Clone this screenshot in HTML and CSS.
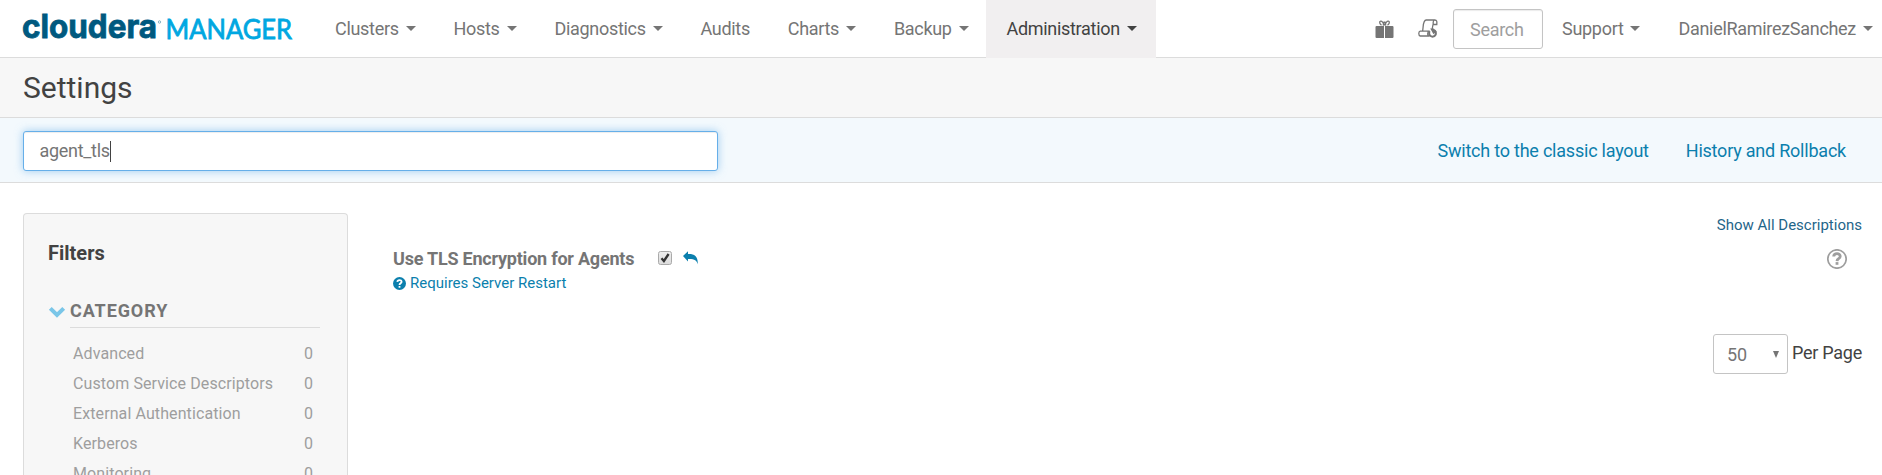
FILE: index.html
```html
<!DOCTYPE html>
<html lang="en">
<head>
<meta charset="utf-8">
<title>Settings - Cloudera Manager</title>
<link rel="stylesheet" href="styles.css">
</head>
<body>
<header class="navbar">
  <a class="brand">
    <svg width="276" height="44" viewBox="0 0 276 44">
      <text class="brand-name" x="-1" y="30" textLength="135" lengthAdjust="spacingAndGlyphs">cloudera</text>
      <circle class="brand-mark" cx="136.5" cy="14" r="1.2"/>
      <text class="brand-product" x="142.5" y="30.5" textLength="126.500" lengthAdjust="spacingAndGlyphs">MANAGER</text>
    </svg>
  </a>
  <nav class="menu">
    <a class="item">Clusters<i class="caret"></i></a>
    <a class="item">Hosts<i class="caret"></i></a>
    <a class="item">Diagnostics<i class="caret"></i></a>
    <a class="item">Audits</a>
    <a class="item">Charts<i class="caret"></i></a>
    <a class="item">Backup<i class="caret"></i></a>
    <a class="item active">Administration<i class="caret"></i></a>
  </nav>
  <div class="tools">
    <svg class="gift" width="19" height="19" viewBox="0 0 19 19">
      <path class="fill" d="M1.6 6H9v12H1.6Q.5 18 .5 17V7Q.5 6 1.6 6zM10 6h7.400q1.100 0 1.100 1v10q0 1-1.100 1H10z"/>
      <path class="line" d="M9.200 5.500C8 2 7 1 5.700 1.200 4 1.600 4.500 4.200 6.500 5.200M9.800 5.500C11 2 12 1 13.300 1.200 15 1.600 14.500 4.200 12.500 5.200M8.200 5.500l.8-3.300h1l.8 3.300"/>
    </svg>
    <svg class="scroll" width="20" height="20" viewBox="0 0 20 20">
      <path class="line" d="M4.500 12.200C5.600 8.500 4.500 1.200 8.200 1h8.600c2.200 0 2.200 1.600 2 4.500h-3.600V3q.2-1.600 1.400-2M15 5.500l-.8 4.500M11.500 12.200H2.200Q.8 12.500.8 14.600T2.200 17h9.300M10.200 12.500q-.9 2 0 4.200"/>
      <path class="ring" d="M11.800 12.200a3.400 3.400 0 1 0 4.600-.8"/>
      <path class="fill" d="M12.200 9.500h3.500l3 3-3.200 2.800z"/>
    </svg>
    <input class="nav-search" type="text" placeholder="Search">
    <a class="item support">Support<i class="caret"></i></a>
    <a class="item user">DanielRamirezSanchez<i class="caret"></i></a>
  </div>
</header>
<section class="title-bar"><h1>Settings</h1></section>
<section class="action-bar">
  <div class="query"><span>agent_tls</span><i class="cursor"></i></div>
  <div class="links"><a>Switch to the classic layout</a><a>History and Rollback</a></div>
</section>
<main class="content">
  <aside class="filters">
    <h2>Filters</h2>
    <div class="group">
      <svg class="chevron" width="18" height="12" viewBox="0 0 18 12"><path d="M2.300 2.300L9 8.900l6.700-6.600"/></svg>
      <div class="group-body">
        <h3>CATEGORY</h3>
        <ul>
          <li><span>Advanced</span><span>0</span></li>
          <li><span>Custom Service Descriptors</span><span>0</span></li>
          <li><span>External Authentication</span><span>0</span></li>
          <li><span>Kerberos</span><span>0</span></li>
          <li><span>Monitoring</span><span>0</span></li>
        </ul>
      </div>
    </div>
  </aside>
  <div class="results">
    <a class="show-all">Show All Descriptions</a>
    <div class="setting">
      <div class="setting-label">
        <strong>Use TLS Encryption for Agents</strong>
        <a class="restart">
          <svg width="13" height="13" viewBox="0 0 13 13"><circle cx="6.500" cy="6.500" r="6.500"/><path class="q" d="M4.300 4.800C4.500 2.500 8.700 2.500 8.600 4.900 8.500 6.400 6.600 6.300 6.500 8"/><path class="q" d="M6.500 9v1.700"/></svg>
          <span>Requires Server Restart</span>
        </a>
      </div>
      <svg class="check" width="14" height="14" viewBox="0 0 14 14">
        <defs><linearGradient id="box" x2="0" y2="1"><stop offset="0" stop-color="#eee"/><stop offset="1" stop-color="#dcdcdc"/></linearGradient></defs>
        <rect x=".5" y=".5" width="13" height="13" rx="2" fill="url(#box)" stroke="#aaa"/>
        <path d="M3.500 7.200l2.400 2.800 4.700-7" fill="none" stroke="#333" stroke-width="2.300"/>
      </svg>
      <svg class="undo" width="15" height="14" viewBox="0 0 15 14"><path d="M0 5L5 .3v2.700c6.500-.3 10.200 2.500 9.700 10.200-.8-3.800-3.500-5.500-9.700-5.200v2.500z"/></svg>
      <svg class="help" width="20" height="20" viewBox="0 0 20 20"><circle cx="10" cy="10" r="9.200"/><path class="q" d="M6.700 7.500C7 3.600 13.300 3.900 13.200 7.500 13.100 9.900 10.100 9.500 10 12.100"/><path class="q" d="M10 13.100v2.700"/></svg>
    </div>
    <div class="pager">
      <div class="select"><span>50</span><i></i></div>
      <span class="per">Per Page</span>
    </div>
  </div>
</main>
</body>
</html>
```
FILE: styles.css
```css
* { box-sizing: border-box; }
html, body { height: 100%; }
body { margin: 0; overflow: hidden; background: #fff; color: #424242; font: 18px/24px Roboto, sans-serif; display: flex; flex-direction: column; }
h1, h2, h3, ul { margin: 0; padding: 0; }
svg { display: block; flex: none; }

.navbar { display: flex; flex: none; height: 58px; border-bottom: 1px solid #dcdcdc; }
.brand { width: 315px; padding: 8px 0 0 23px; }
.brand svg { overflow: visible; }
.brand-name { font: 700 32px Inter, sans-serif; fill: #00597f; stroke: #00597f; stroke-width: .8; }
.brand-product { font: 400 27px Lato, sans-serif; fill: #00a7e1; stroke: #00a7e1; stroke-width: .8; }
.brand-mark { fill: none; stroke: #5f96ad; stroke-width: .7; }
.menu { display: flex; height: 58px; }
.item { display: flex; height: 58px; align-items: center; padding: 0 17.8px 0 20px; color: #757575; white-space: nowrap; letter-spacing: -.3px; }
.caret { margin: 0 0 2px 7px; border: 5px solid transparent; border-top-color: currentColor; border-bottom: 0; }
.active { padding-right: 19px; background: #f1eff0; color: #424242; }
.tools { display: flex; margin-left: auto; align-items: flex-start; }
.gift { margin: 20px 24px 0 0; }
.scroll { margin: 19px 15px 0 0; }
.fill { fill: #757575; }
.line { fill: none; stroke: #757575; stroke-width: 1.300; }
.ring { fill: none; stroke: #757575; stroke-width: 2; }
.nav-search { width: 90px; height: 40px; margin-top: 9px; padding: 1px 16px 0; border: 1px solid #c4c4c4; border-radius: 3px; box-shadow: inset 0 1px 1px rgba(0,0,0,.08); font: 18px Roboto, sans-serif; letter-spacing: -.3px; }
.nav-search::placeholder { color: #9e9e9e; opacity: 1; }
.support { padding: 0 18px 0 19px; }
.user { padding-right: 9px; }

.title-bar { flex: none; height: 60px; padding: 14px 23px 0; background: #f7f7f7; border-bottom: 1px solid #dcdcdc; }
.title-bar h1 { font-size: 30px; line-height: 32px; font-weight: 400; }
.action-bar { display: flex; flex: none; justify-content: space-between; height: 65px; padding: 13px 36px 0 23px; background: #f3f9fd; border-bottom: 1px solid #dcdcdc; }
.query { display: flex; align-items: center; width: 695px; height: 40px; padding-left: 15.500px; background: #fff; border: 1px solid #66afe9; border-radius: 3px; box-shadow: inset 0 1px 1px rgba(0,0,0,.075), 0 0 8px rgba(102,175,233,.6); color: #757575; letter-spacing: -.3px; }
.cursor { width: 1px; height: 21px; background: #424242; }
.links { display: flex; gap: 37px; height: 40px; align-items: center; color: #0b7fad; letter-spacing: -.22px; }

.content { display: flex; flex: 1; min-height: 0; padding: 30px 20px 0 23px; }
.filters { width: 325px; flex: none; padding: 27px 27px 0 24px; background: #f7f7f7; border: 1px solid #dcdcdc; border-bottom: 0; border-radius: 4px 4px 0 0; overflow: hidden; }
.filters h2 { font-size: 20px; line-height: 24px; font-weight: 700; }
.group { display: flex; margin-top: 33px; }
.chevron { margin: 8px 4px 0 0; }
.chevron path { fill: none; stroke: #7ac6e8; stroke-width: 4; }
.group-body { flex: 1; }
.group h3 { height: 30px; border-bottom: 1px solid #dcdcdc; color: #757575; font-size: 18px; line-height: 25px; font-weight: 700; letter-spacing: .9px; }
.group ul { padding: 11px 7px 0 3px; list-style: none; }
.group li { display: flex; justify-content: space-between; height: 30px; line-height: 30px; font-size: 16px; color: #9e9e9e; letter-spacing: .1px; }

.results { flex: 1; display: flex; flex-direction: column; padding-left: 45px; }
.show-all { align-self: flex-end; font-size: 15px; color: #1f6589; line-height: 24px; }
.setting { display: flex; margin-top: 9px; }
.setting-label { width: 265px; }
.setting-label strong { display: block; color: #757575; font-weight: 700; line-height: 26px; white-space: nowrap; letter-spacing: -.22px; }
.restart { display: flex; align-items: center; gap: 4px; margin-top: -1px; color: #0b7fad; font-size: 15px; line-height: 24px; }
.restart circle, .undo path { fill: #0b7fad; }
.restart .q { fill: none; stroke: #fff; stroke-width: 1.800; }
.check { margin: 5px 11px 0 0; }
.undo { margin-top: 5px; }
.help { margin: 3px 15px 0 auto; fill: none; stroke: #9e9e9e; stroke-width: 1.700; }
.help .q { stroke-width: 2.800; }
.pager { display: flex; justify-content: flex-end; margin-top: 39px; gap: 4px; }
.select { display: flex; align-items: center; justify-content: space-between; width: 75px; height: 40px; padding: 1px 8px 0 13px; border: 1px solid #c4c4c4; border-radius: 3px; color: #757575; }
.select i { border: 3.500px solid transparent; border-top: 7px solid #757575; border-bottom: 0; }
.per { line-height: 38px; letter-spacing: -.25px; }
```
